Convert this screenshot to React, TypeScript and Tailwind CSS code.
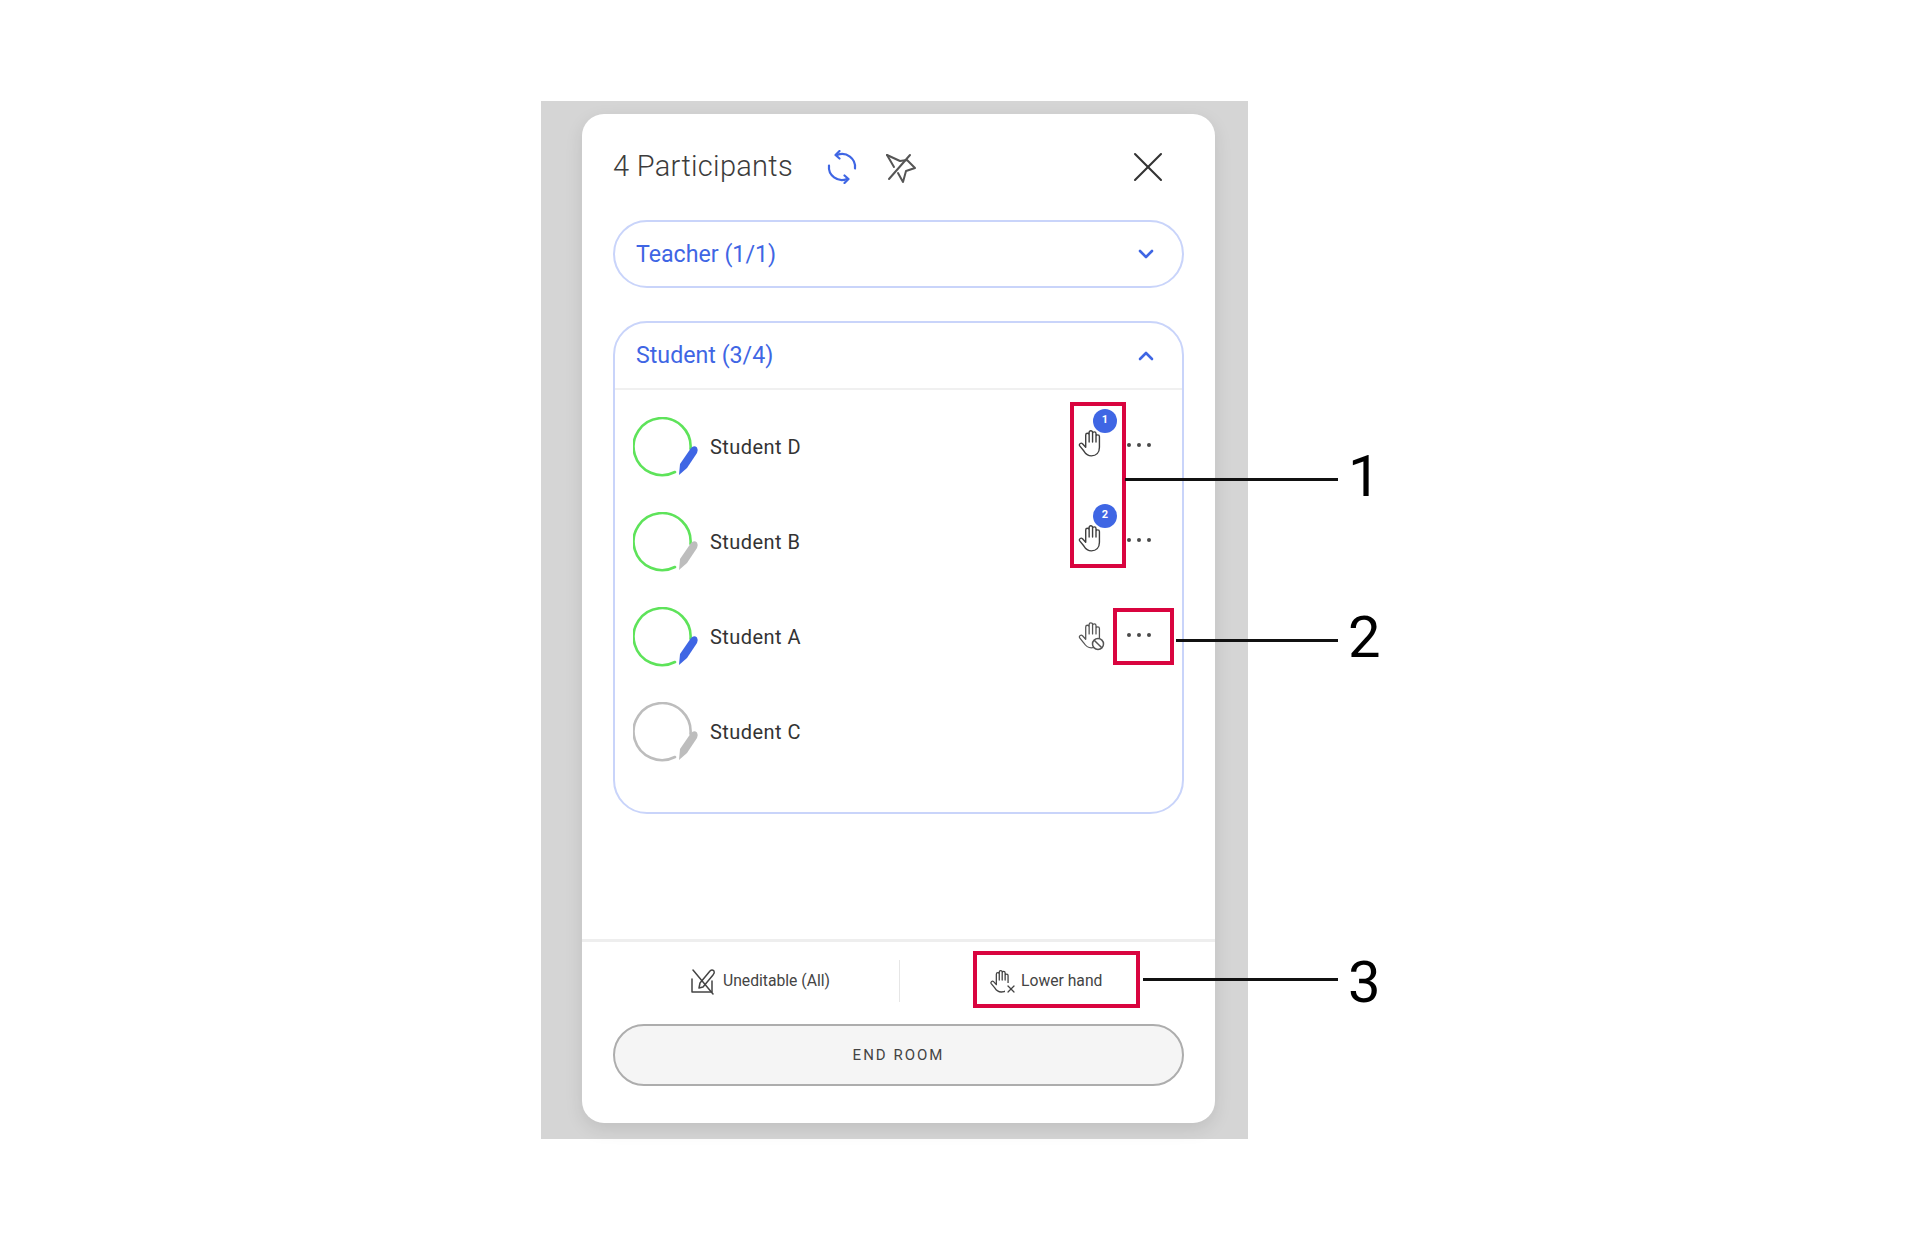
import { X, ChevronDown, ChevronUp } from "lucide-react";

function HandIcon({ w, h, color, sw }: { w: number; h: number; color: string; sw: number }) {
  return (
    <svg width={w} height={h} viewBox="0 0 24 28" fill="none" stroke={color} strokeWidth={sw} strokeLinecap="round" strokeLinejoin="round">
      <path d="M8 14 V6.5 a1.6 1.6 0 0 1 3.2 0 V13 V4.2 a1.6 1.6 0 0 1 3.2 0 V13 V5.2 a1.6 1.6 0 0 1 3.2 0 V13 V8 a1.6 1.6 0 0 1 3.2 0 V18 c0 5 -3 8 -7.5 8 c-4 0 -5.5 -2 -7 -4.5 L2.2 16.5 a1.7 1.7 0 0 1 2.8 -1.8 L8 18 Z" />
    </svg>
  );
}

function Avatar({ ring, pen }: { ring: string; pen: string }) {
  return (
    <svg width="66" height="60" viewBox="0 -1 66 60" fill="none" className="shrink-0">
      <path d="M42 54 A28.5 28.5 0 1 1 57.5 31" stroke={ring} strokeWidth="2.6" strokeLinecap="round" />
      <path d="M46 57 L47 46 L58 30 Q61 27 64 29.5 Q65.5 32 64 35 L54 50 Z" fill={pen} />
    </svg>
  );
}

function Dots() {
  return (
    <div className="flex gap-[6px] mb-1">
      <span className="w-1 h-1 rounded-full bg-[#4a4a4a]" />
      <span className="w-1 h-1 rounded-full bg-[#4a4a4a]" />
      <span className="w-1 h-1 rounded-full bg-[#4a4a4a]" />
    </div>
  );
}

function RaisedHand({ n }: { n: number }) {
  return (
    <div className="relative w-[30px] h-[30px] flex items-center justify-center mb-2">
      <HandIcon w={26} h={30} color="#3f3f3f" sw={1.3} />
      <span className="absolute left-[18px] top-[-19px] w-6 h-6 rounded-full bg-[#3f66e4] text-white text-[11px] font-bold flex items-center justify-center">
        {n}
      </span>
    </div>
  );
}

function BlockedHand() {
  return (
    <div className="relative w-[30px] h-[30px] flex items-center justify-center mb-1">
      <HandIcon w={26} h={30} color="#555" sw={1.2} />
      <svg width="14" height="14" viewBox="0 0 14 14" fill="#fff" stroke="#555" strokeWidth="1.5" className="absolute right-[0px] bottom-[-1px]">
        <circle cx="7" cy="7" r="5.5" />
        <path d="M3.2 3.2 L10.8 10.8" />
      </svg>
    </div>
  );
}

function Row({ name, ring, pen, right }: { name: string; ring: string; pen: string; right?: React.ReactNode }) {
  return (
    <div className="h-[95px] flex items-center pl-[18px] pr-[31px]">
      <Avatar ring={ring} pen={pen} />
      <span className="ml-[11px] text-[20px] text-[#333] tracking-[0.45px]">{name}</span>
      {right && <div className="ml-auto flex items-center gap-[22px]">{right}</div>}
    </div>
  );
}

function Callout({ className, lineClass, label }: { className: string; lineClass: string; label: string }) {
  return (
    <div className={`absolute flex items-center ${className}`}>
      <div className={`h-[3px] bg-[#111] ${lineClass}`} />
      <span className="ml-[10px] text-[58px] leading-none text-black font-normal">{label}</span>
    </div>
  );
}

export default function App() {
  const green = "#5ee35a";
  const blue = "#3f66e4";
  const gray = "#bdbdbd";
  return (
    <div className="relative w-[1921px] h-[1244px] bg-white pl-[541px] pt-[101px] font-['Roboto',sans-serif] overflow-hidden">
      <div className="w-[707px] h-[1038px] bg-[#d5d5d5] pl-[41px] pt-[13px]">
        <div className="w-[633px] h-[1009px] bg-white rounded-[22px] shadow-[0_6px_18px_rgba(0,0,0,0.1)] flex flex-col">
          <div className="px-[31px] flex-1 flex flex-col">
            <div className="h-[106px] flex items-center">
              <span className="text-[29px] font-light text-[#3c3c3c] tracking-[0.3px]">4 Participants</span>
              <svg width="34" height="34" viewBox="0 0 34 34" fill="none" stroke="#3f66e4" strokeWidth="2.2" strokeLinecap="round" strokeLinejoin="round" className="ml-[32px]">
                <path d="M12 5 A13 13 0 0 1 30 18.5" />
                <path d="M14.5 1 L10.5 5 L14.5 8.5" />
                <path d="M22 29 A13 13 0 0 1 4 15.5" />
                <path d="M19.5 33 L23.5 29 L19.5 25.5" />
              </svg>
              <svg width="34" height="34" viewBox="0 0 34 34" fill="none" stroke="#555" strokeWidth="2" strokeLinecap="round" strokeLinejoin="round" className="ml-[25px]">
                <path d="M3 5 L16 11 L23 10 L31 18 L22 21 L19 32 L14 23" />
                <path d="M3 5 L10 17" />
                <path d="M26 5 L5 29" />
              </svg>
              <X size={52} strokeWidth={0.95} color="#333" className="ml-auto mr-[10px]" />
            </div>

            <div className="h-[68px] rounded-[34px] border-2 border-[#c9d4fa] flex items-center pl-[21px] pr-[24px]">
              <span className="text-[23.2px] text-[#3f66e4]">Teacher (1/1)</span>
              <ChevronDown size={24} strokeWidth={2.6} color={blue} className="ml-auto" />
            </div>

            <div className="mt-[33px] h-[493px] rounded-[34px] border-2 border-[#c9d4fa]">
              <div className="h-[67px] flex items-center pl-[21px] pr-[24px] border-b-2 border-[#f0f0f0]">
                <span className="text-[23.2px] text-[#3f66e4]">Student (3/4)</span>
                <ChevronUp size={24} strokeWidth={2.6} color={blue} className="ml-auto" />
              </div>
              <div className="pt-[9px]">
                <Row name="Student D" ring={green} pen={blue} right={<><RaisedHand n={1} /><Dots /></>} />
                <Row name="Student B" ring={green} pen={gray} right={<><RaisedHand n={2} /><Dots /></>} />
                <Row name="Student A" ring={green} pen={blue} right={<><BlockedHand /><Dots /></>} />
                <Row name="Student C" ring={gray} pen={gray} />
              </div>
            </div>
          </div>

          <div className="h-[85px] pb-[5px] border-t-[3px] border-[#eeeeee] flex items-center">
            <div className="w-[317px] flex items-center justify-center gap-[7px] pl-[39px]">
              <svg width="26" height="28" viewBox="0 0 26 28" fill="none" stroke="#444" strokeWidth="1.5" strokeLinecap="round" strokeLinejoin="round">
                <path d="M2 12 V25 H22 V14" />
                <path d="M3 3 L23 27" />
                <path d="M9 21 L10 16 L20 4 Q22 2 24 4 Q25 6 23 8 L13 20 Z" />
              </svg>
              <span className="text-[15.7px] text-[#444]">Uneditable (All)</span>
            </div>
            <div className="w-px h-[42px] bg-[#e6e6e6]" />
            <div className="flex-1 flex items-center gap-[8px] pl-[89px]">
              <div className="relative w-6 h-7 flex items-center">
                <HandIcon w={22} h={26} color="#444" sw={1.4} />
                <X size={12} strokeWidth={2.4} color="#444" className="absolute right-[-4px] bottom-0 bg-white" />
              </div>
              <span className="text-[15.7px] text-[#444]">Lower hand</span>
            </div>
          </div>

          <div className="px-[31px] pb-[37px]">
            <div className="h-[62px] rounded-[31px] bg-[#f5f5f5] border-2 border-[#adadad] flex items-center justify-center text-[15px] tracking-[2px] text-[#444]">
              END ROOM
            </div>
          </div>
        </div>
      </div>

      <div className="absolute left-[1070px] top-[402px] w-[56px] h-[166px] border-4 border-[#d9043f]" />
      <div className="absolute left-[1113px] top-[608px] w-[61px] h-[57px] border-4 border-[#d9043f]" />
      <div className="absolute left-[973px] top-[951px] w-[167px] h-[57px] border-4 border-[#d9043f]" />
      <Callout className="left-[1125px] top-[447px]" lineClass="w-[213px] translate-y-[3px]" label="1" />
      <Callout className="left-[1176px] top-[608px]" lineClass="w-[162px] translate-y-[3px]" label="2" />
      <Callout className="left-[1143px] top-[953px]" lineClass="w-[195px] -translate-y-[3px]" label="3" />
    </div>
  );
}
